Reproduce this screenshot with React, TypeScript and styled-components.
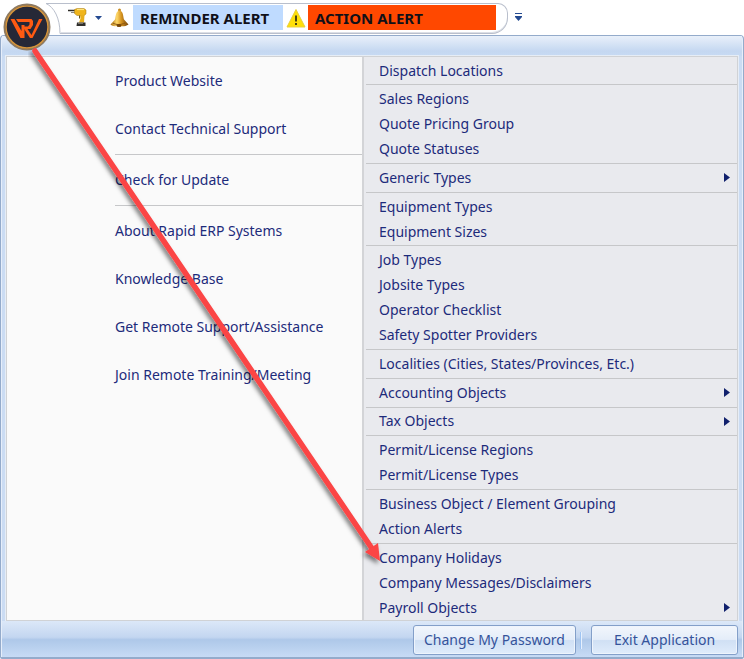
import React from "react";
import styled, { createGlobalStyle } from "styled-components";

const Global = createGlobalStyle`
  *, *::before, *::after { box-sizing: border-box; }
  body { margin: 0; background: #fff; }
  body, button { font-family: "Noto Sans", "Open Sans", sans-serif; font-size: 14px; line-height: 20px; }
`;

const Page = styled.div`
  position: relative;
  display: flex;
  flex-direction: column;
  min-height: 100vh;
`;

const TopBar = styled.header`
  display: flex;
  align-items: flex-start;
  height: 35px;
  padding: 3px 0 0 46px;
`;

const Edge = styled.svg`
  display: block;
  flex: none;
`;

const QuickBar = styled.div`
  display: flex;
  align-items: center;
  flex: 0 1 447px;
  height: 31px;
  padding: 0 0 2px 3px;
  border: 1px solid #b9bfcc;
  border-left: 0;
  border-radius: 0 10px 16px 0;
  box-shadow: inset 0 -1px #dcdfe6;
`;

const IconButton = styled.button<{ $width: number }>`
  display: flex;
  align-items: center;
  justify-content: center;
  width: ${(p) => p.$width}px;
  height: 27px;
  padding: 0;
  border: 0;
  background: none;
`;

const Alert = styled.button<{ $color: string; $width: number }>`
  flex: 0 1 ${(p) => p.$width}px;
  height: 25px;
  padding: 0 7px;
  border: 0;
  background: ${(p) => p.$color};
  color: #101018;
  font-size: 15px;
  font-weight: 700;
  text-align: left;
  white-space: nowrap;
`;

const Menu = styled.main`
  display: flex;
  flex-direction: column;
  flex: 1;
  padding: 0 5px;
  border: 1px solid #94abcb;
  border-bottom-width: 2px;
  border-radius: 4px 4px 2px 2px;
  box-shadow: inset 0 0 0 1px #e6eefa;
  background: #cbdcf3;
`;

const MenuCap = styled.div`
  height: 20px;
  margin: 0 -4px;
  background: linear-gradient(#e9f0fa, #c5d8f1 75%, #c7daf3);
`;

const Panels = styled.div`
  display: grid;
  grid-template-columns: 355fr 375fr;
  flex: 1;
  border: 1px solid #d0d2d5;
  outline: 1px solid #e6edf6;
`;

const HelpPane = styled.nav`
  padding: 0 0 0 108px;
  background: #fafafa;
`;

const ListPane = styled.nav`
  display: flex;
  flex-direction: column;
  padding: 1px 0 0 2px;
  border-left: 2px solid #d3d4d7;
  background: #e9eaee;
`;

const MenuItem = styled.button<{ $tall?: boolean }>`
  display: flex;
  align-items: center;
  justify-content: space-between;
  width: 100%;
  height: ${(p) => (p.$tall ? 48 : 25)}px;
  padding: ${(p) => (p.$tall ? "0" : "0 7px 0 13px")};
  border: 0;
  background: none;
  color: #1d2b7b;
  text-align: left;
  white-space: nowrap;
`;

const Divider = styled.hr`
  width: 100%;
  height: 3px;
  margin: 0;
  border: 0;
  background: linear-gradient(#c6c7c9, #c6c7c9) center / 100% 1px no-repeat;
`;

const GroupDivider = styled(Divider)`
  flex: 1 0 3px;
`;

const Footer = styled.footer`
  display: flex;
  align-items: center;
  justify-content: flex-end;
  height: 36px;
  margin: 0 -4px;
  padding: 2px 4px 0 0;
  background: linear-gradient(#dce8f8, #c3d6f0 45%, #aec8e9 52%, #c7dbf5);
`;

const FooterButton = styled.button<{ $width: number }>`
  width: ${(p) => p.$width}px;
  height: 30px;
  padding: 0;
  border: 1px solid #839fc9;
  border-radius: 3px;
  background: linear-gradient(#f2f6fc, #e4edf9 48%, #d0e0f4 52%, #e0ecfb);
  box-shadow: inset 0 0 0 1px #eef4fc;
  color: #35539b;
  white-space: nowrap;
`;

const Grip = styled.span`
  width: 2px;
  height: 17px;
  margin: 0 9px 0 4px;
  border-left: 1px solid #9fc4f2;
  border-right: 1px solid #e6f0fd;
`;

const OrbButton = styled.button`
  position: absolute;
  top: 3px;
  left: 3px;
  padding: 0;
  border: 0;
  border-radius: 50%;
  background: none;

  svg { display: block; }
`;

const Pointer = styled.svg`
  position: absolute;
  top: 44px;
  left: 28px;
  pointer-events: none;
`;

const helpGroups = [
  ["Product Website", "Contact Technical Support"],
  ["Check for Update"],
  ["About Rapid ERP Systems", "Knowledge Base", "Get Remote Support/Assistance", "Join Remote Training/Meeting"],
];

const listGroups = [
  ["Dispatch Locations"],
  ["Sales Regions", "Quote Pricing Group", "Quote Statuses"],
  ["Generic Types"],
  ["Equipment Types", "Equipment Sizes"],
  ["Job Types", "Jobsite Types", "Operator Checklist", "Safety Spotter Providers"],
  ["Localities (Cities, States/Provinces, Etc.)"],
  ["Accounting Objects"],
  ["Tax Objects"],
  ["Permit/License Regions", "Permit/License Types"],
  ["Business Object / Element Grouping", "Action Alerts"],
  ["Company Holidays", "Company Messages/Disclaimers", "Payroll Objects"],
];

const submenus = new Set(["Generic Types", "Accounting Objects", "Tax Objects", "Payroll Objects"]);

const DrillIcon = () => (
  <svg width="19" height="19" viewBox="0 0 19 19" aria-hidden="true">
    <path d="M0 2.500h8" stroke="#2f2d28" strokeWidth="1.500" />
    <path d="M3 4.500h4" stroke="#8c887c" />
    <path d="M6.500 1.500 9 .5h7l2 1.500v4l-2 1.500H9L6.500 5.500z" fill="#f0b51c" stroke="#9c7415" strokeWidth=".5" />
    <path d="M9 1.500h7" stroke="#ffe57b" strokeWidth="1.200" />
    <path d="M12 7h4.500l-.5 7.500h-5l1.500-4z" fill="#e8af1d" />
    <path d="M11.500 7.500v3" stroke="#65521d" />
    <path d="M9 14.500h8.500V18H8.500z" fill="#302f2c" />
    <path d="M10 15.500h5" stroke="#77736a" />
  </svg>
);

const BellIcon = () => (
  <svg width="19" height="20" viewBox="0 0 19 20" aria-hidden="true">
    <defs>
      <linearGradient id="bell"><stop stopColor="#a66b10" /><stop offset=".35" stopColor="#ffd96b" /><stop offset=".6" stopColor="#d69420" /><stop offset="1" stopColor="#714009" /></linearGradient>
    </defs>
    <circle cx="9.5" cy="2" r="1.5" fill="#c88c21" />
    <path d="M9.500 2.500C5.500 3.500 6 8 5 11.500L.5 16.500c2 2 5 2 8 1 3 1.500 7 1 10-1L14 11.500C13 8 13.500 3.500 9.500 2.500z" fill="url(#bell)" />
    <path d="M3 15c3 2 8 2 12 0" fill="none" stroke="#8b5410" />
    <ellipse cx="9" cy="17.500" rx="2.500" ry="1.500" fill="#754508" />
  </svg>
);

const WarningIcon = () => (
  <svg width="20" height="20" viewBox="0 0 20 20" aria-hidden="true">
    <path d="M10 1.500 19 19H1z" fill="#ffdf08" stroke="#e9cf3b" strokeLinejoin="round" />
    <path d="M10 7.500v6M10 15v2" stroke="#4a4412" strokeWidth="2" />
  </svg>
);

const SubmenuArrow = () => (
  <svg width="6" height="9" viewBox="0 0 6 9" aria-hidden="true"><path d="M0 0 6 4.500 0 9z" fill="#10206c" /></svg>
);

export default function App() {
  return (
    <Page>
      <Global />
      <TopBar>
        <Edge width="15" height="31" viewBox="0 0 15 31" aria-hidden="true">
          <path d="M0 .5C8 4 14 15 14 30.500H15M0 .5h15" fill="none" stroke="#b9bfcc" />
        </Edge>
        <QuickBar>
          <IconButton $width={26} aria-label="Equipment"><DrillIcon /></IconButton>
          <IconButton $width={16} aria-label="Equipment options">
            <svg width="7" height="4" viewBox="0 0 7 4"><path d="M0 0h7L3.500 4z" fill="#244a91" /></svg>
          </IconButton>
          <IconButton $width={27} aria-label="Reminders"><BellIcon /></IconButton>
          <Alert $color="#bfdbff" $width={150}>REMINDER ALERT</Alert>
          <IconButton $width={25} aria-label="Warnings"><WarningIcon /></IconButton>
          <Alert $color="#ff4800" $width={188}>ACTION ALERT</Alert>
        </QuickBar>
        <IconButton $width={20} aria-label="Customize toolbar">
          <svg width="7" height="8" viewBox="0 0 7 8"><path d="M0 0h7v1H0zM0 3h7v1L3.500 8 0 4z" fill="#244a91" /></svg>
        </IconButton>
      </TopBar>
      <Menu>
        <MenuCap />
        <Panels>
          <HelpPane aria-label="Help">
            {helpGroups.map((group, i) => (
              <React.Fragment key={group[0]}>
                {i > 0 && <Divider />}
                {group.map((label) => <MenuItem key={label} $tall>{label}</MenuItem>)}
              </React.Fragment>
            ))}
          </HelpPane>
          <ListPane aria-label="Lists">
            {listGroups.map((group, i) => (
              <React.Fragment key={group[0]}>
                {i > 0 && <GroupDivider />}
                {group.map((label) => (
                  <MenuItem key={label}>{label}{submenus.has(label) && <SubmenuArrow />}</MenuItem>
                ))}
              </React.Fragment>
            ))}
          </ListPane>
        </Panels>
        <Footer>
          <FooterButton $width={163}>Change My Password</FooterButton>
          <Grip />
          <FooterButton $width={147}>Exit Application</FooterButton>
        </Footer>
      </Menu>
      <OrbButton aria-label="Application menu">
        <svg width="48" height="48" viewBox="0 0 48 48">
          <circle cx="24" cy="24" r="22.500" fill="#262837" stroke="#8d7a62" strokeWidth="2" />
          <circle cx="24" cy="24" r="21" fill="none" stroke="#d6953b" strokeWidth="1.500" />
          <g fill="#ff5a12">
            <path d="M7.500 16h4l7 12v-6h3v13h-4z" />
            <path d="M13 16h15.500l1.500 2v4l-2.500 4h-3l4 6L36 16h3.500L29.500 35H27l-7.500-11.500H25l1.500-2V19H15z" />
          </g>
        </svg>
      </OrbButton>
      <Pointer width="360" height="525" viewBox="28 44 360 525" aria-hidden="true">
        <defs>
          <filter id="shade" x="-10%" y="-10%" width="120%" height="120%">
            <feDropShadow dx="-2" dy="3" stdDeviation="2" floodColor="#000" floodOpacity=".5" />
          </filter>
        </defs>
        <g filter="url(#shade)">
          <path d="M35 51 371 547" stroke="#fb4444" strokeWidth="5.500" strokeLinecap="round" />
          <path d="M380 561 365 552 378 543z" fill="#fb4444" />
        </g>
      </Pointer>
    </Page>
  );
}
